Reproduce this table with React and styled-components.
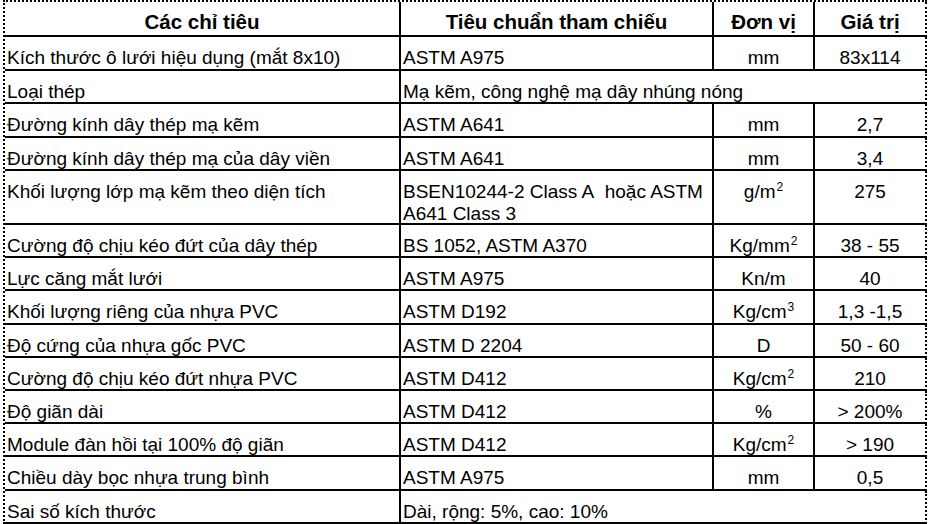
import React from "react";
import styled, { createGlobalStyle } from "styled-components";

const Global = createGlobalStyle`
  html, body {
    margin: 0;
    padding: 0;
    background: #ffffff;
  }
  body {
    font-family: "Liberation Sans", Arial, sans-serif;
    color: #000000;
  }
`;

const Sheet = styled.div`
  margin-left: 3px;
  width: 922px;
  display: grid;
  grid-template-columns: 396px 313px 101px 112px;
  grid-template-rows: 35px repeat(4, 33.5px) 54px repeat(9, 33.2px);
  border-left: 2px dotted #000;
  border-top: 2px dotted #000;
  font-size: 19px;
  line-height: 22px;
`;

const Cell = styled.div`
  box-sizing: border-box;
  display: flex;
  align-items: flex-start;
  justify-content: ${(p) => (p.$center ? "center" : "flex-start")};
  text-align: ${(p) => (p.$center ? "center" : "left")};
  grid-column: ${(p) => (p.$span ? `span ${p.$span}` : "auto")};
  padding: 10px ${(p) => (p.$center ? "0" : "2px")} 0;
  border-bottom: 2px solid #000;
  border-right: 2px ${(p) => (p.$last ? "dotted" : "solid")} #000;
  white-space: nowrap;
`;

const Head = styled(Cell)`
  font-weight: bold;
  font-size: 20.5px;
  justify-content: center;
  padding-top: 9px;
`;

const Text = styled.span`
  display: inline-block;
  white-space: nowrap;
`;

const Sup = styled.sup`
  font-size: 12px;
  line-height: 0;
  vertical-align: 7px;
  margin-left: 1px;
`;

const rows = [
  ["Kích thước ô lưới hiệu dụng (mắt 8x10)", "ASTM A975", "mm", "83x114"],
  ["Loại thép", "Mạ kẽm, công nghệ mạ dây nhúng nóng"],
  ["Đường kính dây thép mạ kẽm", "ASTM A641", "mm", "2,7"],
  ["Đường kính dây thép mạ của dây viền", "ASTM A641", "mm", "3,4"],
  [
    "Khối lượng lớp mạ kẽm theo diện tích",
    <>
      BSEN10244-2 Class A&nbsp; hoặc ASTM
      <br />
      A641 Class 3
    </>,
    <>
      g/m<Sup>2</Sup>
    </>,
    "275",
  ],
  [
    "Cường độ chịu kéo đứt của dây thép",
    "BS 1052, ASTM A370",
    <>
      Kg/mm<Sup>2</Sup>
    </>,
    "38 - 55",
  ],
  ["Lực căng mắt lưới", "ASTM A975", "Kn/m", "40"],
  [
    "Khối lượng riêng của nhựa PVC",
    "ASTM D192",
    <>
      Kg/cm<Sup>3</Sup>
    </>,
    "1,3 -1,5",
  ],
  ["Độ cứng của nhựa gốc PVC", "ASTM D 2204", "D", "50 - 60"],
  [
    "Cường độ chịu kéo đứt nhựa PVC",
    "ASTM D412",
    <>
      Kg/cm<Sup>2</Sup>
    </>,
    "210",
  ],
  ["Độ giãn dài", "ASTM D412", "%", "> 200%"],
  [
    "Module đàn hồi tại 100% độ giãn",
    "ASTM D412",
    <>
      Kg/cm<Sup>2</Sup>
    </>,
    "> 190",
  ],
  ["Chiều dày bọc nhựa trung bình", "ASTM A975", "mm", "0,5"],
  ["Sai số kích thước", "Dài, rộng: 5%, cao: 10%"],
];

export default function App() {
  return (
    <>
      <Global />
      <Sheet>
        <Head>Các chỉ tiêu</Head>
        <Head>Tiêu chuẩn tham chiếu</Head>
        <Head>Đơn vị</Head>
        <Head $last>Giá trị</Head>
        {rows.map((r, i) =>
          r.length === 2 ? (
            <React.Fragment key={i}>
              <Cell>
                <Text>{r[0]}</Text>
              </Cell>
              <Cell $span={3} $last>
                <Text>{r[1]}</Text>
              </Cell>
            </React.Fragment>
          ) : (
            <React.Fragment key={i}>
              <Cell>
                <Text>{r[0]}</Text>
              </Cell>
              <Cell>
                <Text>{r[1]}</Text>
              </Cell>
              <Cell $center>
                <Text>{r[2]}</Text>
              </Cell>
              <Cell $center $last>
                <Text>{r[3]}</Text>
              </Cell>
            </React.Fragment>
          )
        )}
      </Sheet>
    </>
  );
}
